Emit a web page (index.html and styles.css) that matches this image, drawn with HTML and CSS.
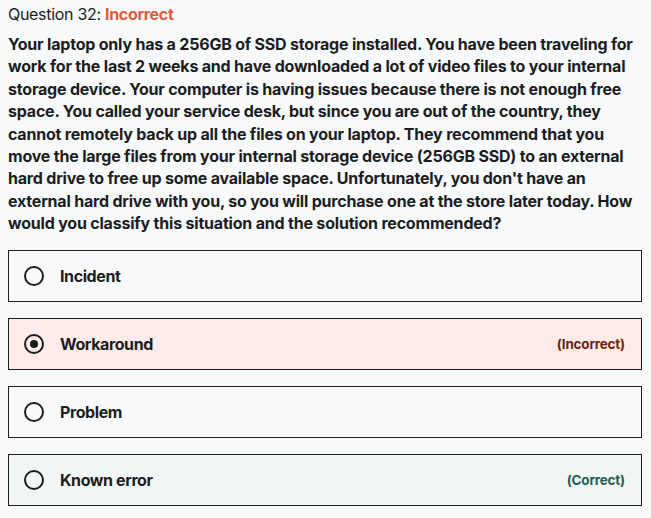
FILE: index.html
```html
<!DOCTYPE html>
<html lang="en">
<head>
<meta charset="utf-8">
<link rel="stylesheet" href="styles.css">
</head>
<body>
<div class="quiz">
  <div class="q-header">Question 32: <span class="status-incorrect">Incorrect</span></div>
  <p class="q-text">Your laptop only has a 256GB of SSD storage installed. You have been traveling for work for the last 2 weeks and have downloaded a lot of video files to your internal storage device. Your computer is having issues because there is not enough free space. You called your service desk, but since you are out of the country, they cannot remotely back up all the files on your laptop. They recommend that you move the large files from your internal storage device (256GB SSD) to an external hard drive to free up some available space. Unfortunately, you don't have an external hard drive with you, so you will purchase one at the store later today. How would you classify this situation and the solution recommended?</p>
  <ul class="options">
    <li class="option">
      <span class="radio"></span>
      <span class="label">Incident</span>
    </li>
    <li class="option option-wrong">
      <span class="radio radio-checked"></span>
      <span class="label">Workaround</span>
      <span class="tag tag-wrong">(Incorrect)</span>
    </li>
    <li class="option">
      <span class="radio"></span>
      <span class="label">Problem</span>
    </li>
    <li class="option option-right">
      <span class="radio"></span>
      <span class="label">Known error</span>
      <span class="tag tag-right">(Correct)</span>
    </li>
  </ul>
</div>
</body>
</html>
```
FILE: styles.css
```css
html, body {
  margin: 0;
  padding: 0;
  background: #f7f9fa;
}
body {
  padding: 0 9px 0 8px;
  font-family: Inter, "Noto Sans", sans-serif;
  color: #1c1d1f;
}
.quiz {
  padding-top: 3px;
}
.q-header {
  font-size: 16px;
  line-height: 22px;
  font-weight: 400;
  letter-spacing: -0.3px;
}
.status-incorrect {
  color: #e2593c;
  font-weight: 700;
}
.q-text {
  margin: 8px 0 0;
  font-size: 16px;
  line-height: 22.4px;
  font-weight: 700;
  letter-spacing: -0.2px;
}
.options {
  list-style: none;
  margin: 15px 0 0;
  padding: 0;
  display: flex;
  flex-direction: column;
  gap: 16px;
}
.option {
  display: flex;
  align-items: center;
  height: 50px;
  border: 1px solid #1c1d1f;
  padding: 0 16px 0 15px;
  background: #f7f9fa;
}
.option-wrong {
  background: #fcebe8;
}
.option-right {
  background: #f1f5f4;
}
.radio {
  width: 16px;
  height: 16px;
  border: 2px solid #1c1d1f;
  border-radius: 50%;
  box-sizing: content-box;
  flex: none;
  display: flex;
  align-items: center;
  justify-content: center;
}
.radio-checked::after {
  content: "";
  width: 8px;
  height: 8px;
  border-radius: 50%;
  background: #1c1d1f;
}
.label {
  margin-left: 16px;
  font-size: 16px;
  font-weight: 700;
  letter-spacing: -0.4px;
}
.tag {
  margin-left: auto;
  font-size: 13.5px;
  font-weight: 700;
  letter-spacing: -0.2px;
}
.tag-wrong {
  color: #6e1f10;
}
.tag-right {
  color: #1e6055;
}
```
